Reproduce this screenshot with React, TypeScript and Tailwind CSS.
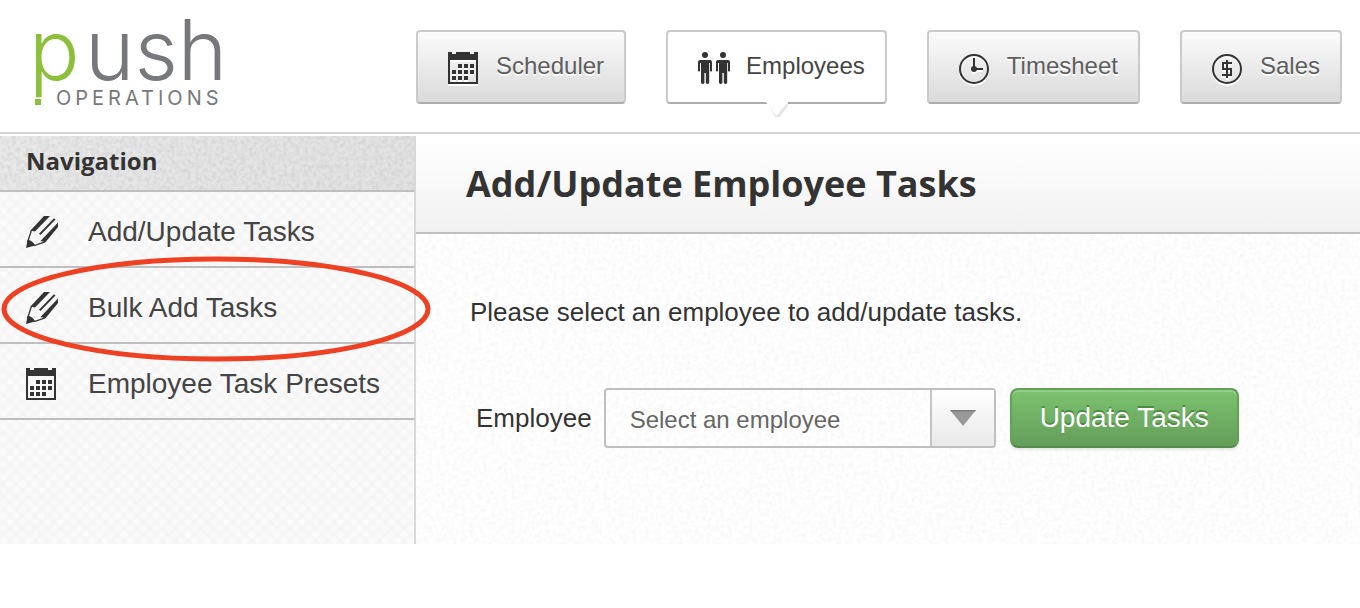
import React, { useState } from 'react';

type IconProps = { className?: string };

const CalendarIcon: React.FC<IconProps> = ({ className }) => (
  <svg viewBox="0 0 32 32" className={className} fill="#333" shapeRendering="crispEdges" aria-hidden="true">
    <path d="M0 0h4v2h4V0h14v2h4V0h4v32H0zM2 8v22h26V8z" fillRule="evenodd" />
    <path d="M10 12h4v4h-4zM16 12h4v4h-4zM22 12h4v4h-4zM4 18h4v4H4zM10 18h4v4h-4zM16 18h4v4h-4zM22 18h4v4h-4zM4 24h4v4H4zM10 24h4v4h-4zM16 24h4v4h-4z" />
  </svg>
);

const PeopleIcon: React.FC<IconProps> = ({ className }) => (
  <svg viewBox="0 0 32 32" className={className} fill="#333" aria-hidden="true">
    {[0, 18].map((x) => (
      <g key={x} transform={`translate(${x} 0)`}>
        <circle cx="7" cy="3" r="3" />
        <path d="M2 8h10a2 2 0 0 1 2 2v9q-1 1-2 0v-8h-.8v20q-1.5 2-3.4 0V21H6.4v10q-1.8 2-3.4 0V11H2v8q-1 1-2 0v-9a2 2 0 0 1 2-2z" />
      </g>
    ))}
  </svg>
);

const ClockIcon: React.FC<IconProps> = ({ className }) => (
  <svg viewBox="0 0 32 32" className={className} fill="none" stroke="#333" strokeWidth="2" aria-hidden="true">
    <circle cx="15" cy="17" r="14" />
    <path d="M15 17V6M15 17h9" />
    <circle cx="15" cy="17" r="3" fill="#333" stroke="none" />
  </svg>
);

const DollarIcon: React.FC<IconProps> = ({ className }) => (
  <svg viewBox="0 0 32 32" className={className} fill="none" stroke="#333" strokeWidth="2" aria-hidden="true">
    <circle cx="15" cy="17" r="14" />
    <path d="M20 11h-9v6h8v6h-9M15 8v18" />
  </svg>
);

const PencilIcon: React.FC<IconProps> = ({ className }) => (
  <svg viewBox="0 0 32 32" className={className} fill="#333" aria-hidden="true">
    <path d="M18 0h6L9 15.5 4.5 14.5z" />
    <path d="M28 2.2l1.5 1.3L14.500 19l-1.500-1.300z" />
    <path d="M32 6.500v4.500L19.500 26.300l-5-1.300z" />
    <path d="M5.500 14L1.700 26 9 29.300l10-3.500" fill="none" stroke="#333" strokeWidth="1.300" />
    <path d="M1.500 24q5 0 7.500 5.500L0 32z" />
  </svg>
);

// fine paper texture laid over a panel
const Grain: React.FC<{ id: string; opacity: number }> = ({ id, opacity }) => (
  <svg className="absolute inset-0 h-full w-full pointer-events-none" aria-hidden="true">
    <filter id={id}>
      <feTurbulence type="fractalNoise" baseFrequency="0.24" numOctaves="2" seed="4" />
      <feColorMatrix values={`0 0 0 0 0  0 0 0 0 0  0 0 0 0 0  ${opacity} 0 0 0 ${-opacity * 0.35}`} />
    </filter>
    <rect width="100%" height="100%" filter={`url(#${id})`} />
  </svg>
);

const Logo = () => (
  <a href="#" aria-label="Push Operations" className="block">
    <svg viewBox="0 0 220 120" className="h-[120px] w-[220px]">
      <g className="font-['Inter'] font-light" fontSize="84">
        <text x="5" y="80" fill="#8cbf3a">p</text>
        <text x="61" y="80" fill="#77787b">ush</text>
      </g>
      <rect x="11" y="99" width="6" height="6" fill="#8cbf3a" />
      <text x="32" y="105" fontSize="20" fill="#77787b" className="font-['Inter'] tracking-[0.2em]">
        OPERATIONS
      </text>
    </svg>
  </a>
);

const tabs = [
  { label: 'Scheduler', Icon: CalendarIcon },
  { label: 'Employees', Icon: PeopleIcon },
  { label: 'Timesheet', Icon: ClockIcon },
  { label: 'Sales', Icon: DollarIcon },
];

const links = [
  { label: 'Add/Update Tasks', Icon: PencilIcon },
  { label: 'Bulk Add Tasks', Icon: PencilIcon, circled: true },
  { label: 'Employee Task Presets', Icon: CalendarIcon },
];

const Header = () => {
  const [active, setActive] = useState('Employees');

  return (
    <header className="flex border-b-2 border-[#d4d4d4] bg-white">
      <div className="w-[416px] shrink-0 pl-6">
        <Logo />
      </div>
      <nav className="flex gap-10 pt-[30px] pb-7">
        {tabs.map(({ label, Icon }) => {
          const isActive = label === active;
          return (
            <button
              key={label}
              type="button"
              onClick={() => setActive(label)}
              className={`relative flex h-[74px] shrink-0 items-center gap-4 rounded border-2 border-[#cacaca] border-b-[#adadad] pl-[30px] pr-5 pt-0.5 text-2xl ${
                isActive
                  ? 'bg-white text-[#444]'
                  : 'bg-linear-to-b from-[#fbfbfb] to-[#dadada] text-[#5e5e5e] [text-shadow:0_2px_0_#fff]'
              }`}
            >
              <Icon className="h-8 w-8 drop-shadow-[0_2px_0_#fff]" />
              <span className="pb-1">{label}</span>
              {isActive && (
                <svg viewBox="0 0 24 16" className="absolute left-1/2 top-full -ml-2.5 h-4 w-6" aria-hidden="true">
                  <path d="M1 0h21v4L14 15H9z" fill="#e6e6e6" />
                  <path d="M0 0h22L10 14z" fill="#fff" />
                </svg>
              )}
            </button>
          );
        })}
      </nav>
    </header>
  );
};

const Sidebar = () => (
  <aside className="w-[416px] shrink-0 border-r-2 border-[#d8d8d8] bg-[#fafafa] bg-[repeating-linear-gradient(45deg,#f3f3f3aa_0px,transparent_3px,transparent_6px,#f3f3f3aa_9px),repeating-linear-gradient(-45deg,#f3f3f3aa_0px,transparent_3px,transparent_6px,#f3f3f3aa_9px)]">
    <h2 className="relative flex h-14 items-center border-b-2 border-[#bfbfbf] bg-linear-to-r from-[#e8e8e8] to-[#e2e2e2] pb-1 pl-[26px] font-['Open_Sans'] text-2xl font-bold text-[#333]">
      <Grain id="grain-nav" opacity={0.14} />
      <span className="relative">Navigation</span>
    </h2>
    <ul>
      {links.map(({ label, Icon, circled }) => (
        <li key={label} className="relative border-b-2 border-[#bfbfbf]">
          <a href="#" className="flex h-[74px] items-center gap-[30px] pl-[26px] pt-1.5 text-[28px] text-[#444]">
            <Icon className="h-8 w-8 shrink-0" />
            <span>{label}</span>
          </a>
          {circled && (
            <svg
              viewBox="0 0 430 106"
              className="absolute -top-3 left-px z-10 h-[106px] w-[430px] pointer-events-none"
              aria-hidden="true"
            >
              <ellipse cx="215" cy="53" rx="212" ry="50" fill="none" stroke="#ee4023" strokeWidth="5" />
            </svg>
          )}
        </li>
      ))}
    </ul>
  </aside>
);

const EmployeeForm = () => (
  <form className="flex items-center" onSubmit={(e) => e.preventDefault()}>
    <label htmlFor="employee" className="mr-3 text-[26px] text-[#333]">
      Employee
    </label>
    <div className="relative mr-3.5 w-[392px]">
      <select
        id="employee"
        defaultValue=""
        className="h-[60px] w-full appearance-none rounded border-2 border-[#bfbfbf] bg-transparent pl-6 pr-16 pt-1 text-2xl text-[#666]"
      >
        <option value="">Select an employee</option>
      </select>
      <span className="absolute inset-y-0.5 right-0.5 flex w-16 items-center justify-center border-l-2 border-[#c4c4c4] bg-linear-to-b from-white to-[#e9e9e9] pointer-events-none">
        <svg viewBox="0 0 26 16" className="h-4 w-[26px]" aria-hidden="true">
          <path d="M0 0h26L13 16z" fill="#999" />
          <path d="M0 0h26l-1 1.5H1z" fill="#7d7d7d" />
        </svg>
      </span>
    </div>
    <button
      type="submit"
      className="h-[60px] shrink-0 rounded-lg border-2 border-[#62a157] border-b-[#558b4b] bg-linear-to-b from-[#7cc36f] to-[#649d5a] px-7 text-[28px] text-white shadow-[inset_0_2px_0_#93cd88,0_2px_3px_#00000018] [text-shadow:0_-2px_0_#4f8a45]"
    >
      Update Tasks
    </button>
  </form>
);

export default function App() {
  return (
    <div className="min-h-screen bg-white font-['Liberation_Sans',sans-serif]">
      <Header />
      <div className="mt-0.5 flex min-h-[408px]">
        <Sidebar />
        <main className="flex min-w-0 flex-1 flex-col">
          <div className="flex h-[98px] items-center border-b-2 border-[#bfbfbf] bg-linear-to-b from-white to-[#f1f1f1] pl-[50px]">
            <h1 className="font-['Open_Sans'] text-4xl font-bold text-[#333]">Add/Update Employee Tasks</h1>
          </div>
          <div className="relative flex-1 pl-[54px] pt-[58px]">
            <Grain id="grain-main" opacity={0.06} />
            <div className="relative">
              <p className="mb-14 text-[26px] leading-10 text-[#333]">
                Please select an employee to add/update tasks.
              </p>
              <div className="pl-1.5">
                <EmployeeForm />
              </div>
            </div>
          </div>
        </main>
      </div>
    </div>
  );
}
